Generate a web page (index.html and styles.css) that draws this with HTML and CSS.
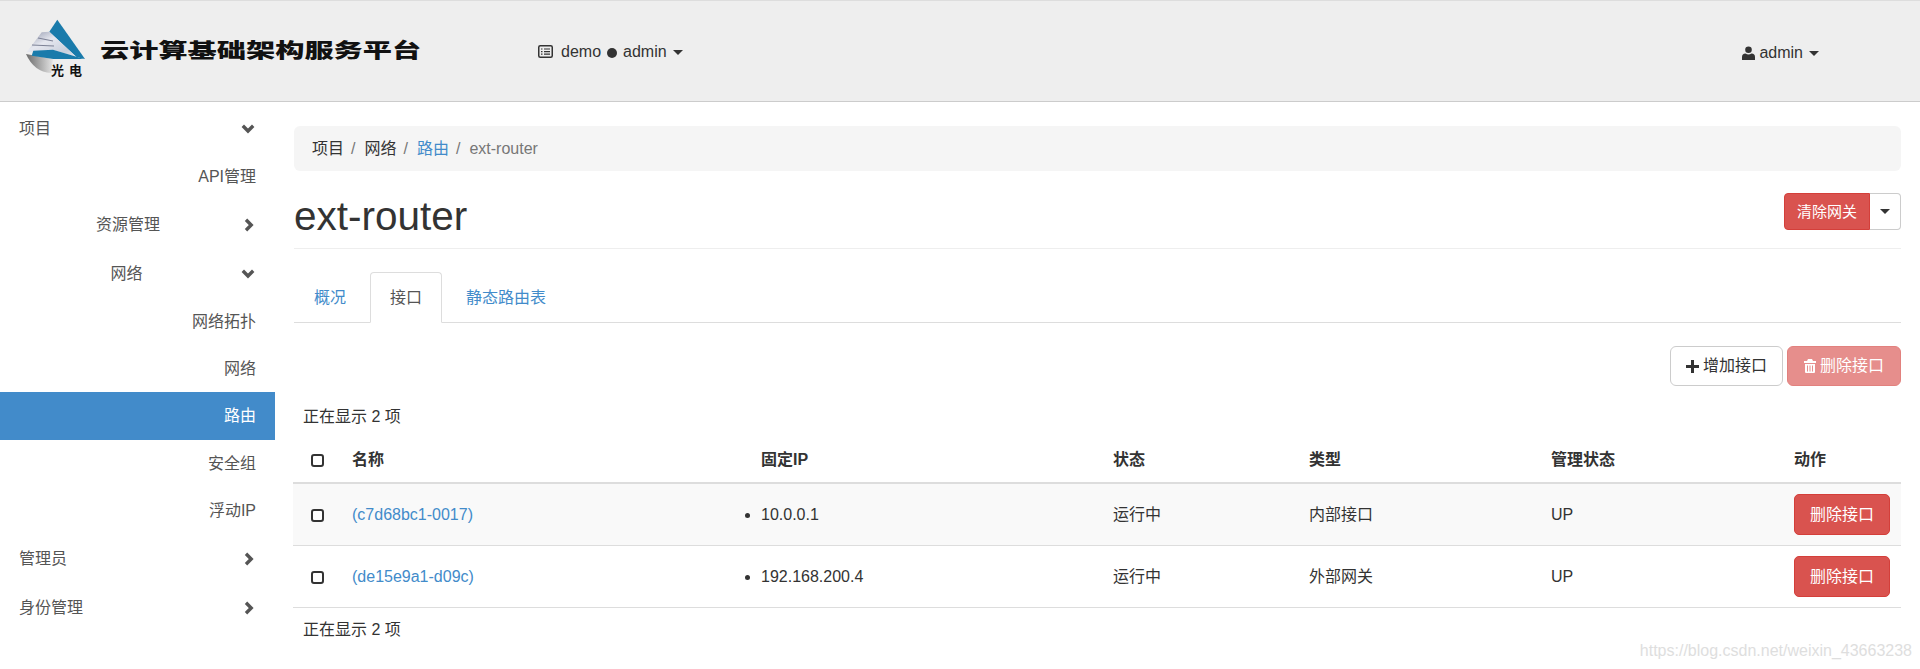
FILE: index.html
```html
<!DOCTYPE html>
<html lang="zh-CN">
<head>
  <meta charset="UTF-8" />
  <title>ext-router</title>
  <link rel="stylesheet" href="styles.css">
</head>
<body>
  <header class="topbar">
    <div class="brand">
      <svg class="brand-logo" viewBox="0 0 70 62" width="70" height="62">
        <defs>
          <linearGradient id="wing" x1="0" y1="0" x2="1" y2="1">
            <stop offset="0" stop-color="#8d93a8" />
            <stop offset="0.35" stop-color="#e6e8f0" />
            <stop offset="0.7" stop-color="#c9cfdc" />
            <stop offset="1" stop-color="#f2f4f6" />
          </linearGradient>
          <linearGradient id="disc" x1="0" y1="0" x2="1" y2="0">
            <stop offset="0" stop-color="#6b6b6b" />
            <stop offset="1" stop-color="#e4e4e4" />
          </linearGradient>
        </defs>
        <path d="M6 38 L33 43 L31 57 Q14 56 6 38Z" fill="url(#disc)" />
        <path d="M37.3 3.7 L65 43 L56.7 41.3 L29.3 15.7Z" fill="#1a7bab" />
        <path d="M29.3 15.7 L21.7 16.3 L6.7 36.3 L33 33.7 L63 43 L56.7 41.3Z" fill="url(#wing)" />
        <path d="M18 22 L33 25 M12 29 L34 30" stroke="#7d8296" stroke-width="1.2" fill="none" />
        <path d="M13.3 34.7 L33 33.7 L64 43 L33.3 43 L11.7 39.7Z" fill="#1a7bab" />
        <text class="brand-mark" x="31" y="59">光电</text>
      </svg>
      <span class="brand-name">云计算基础架构服务平台</span>
    </div>
    <a class="nav-menu">
      <svg class="icon" viewBox="0 0 15 13" width="15" height="13">
        <rect x="0.75" y="0.75" width="13.5" height="11.5" rx="1.5" fill="none" stroke="#333" stroke-width="1.5" />
        <path d="M3 4h1.5M6 4h6M3 6.6h1.5M6 6.6h6M3 9.2h1.5M6 9.2h6" stroke="#333" stroke-width="1.2" />
      </svg>
      <span>demo</span>
      <i class="dot"></i>
      <span>admin</span>
      <i class="caret"></i>
    </a>
    <a class="nav-menu user-menu">
      <svg class="icon" viewBox="0 0 13 14" width="13" height="14">
        <circle cx="6.5" cy="3.8" r="3.3" fill="#333" />
        <path d="M0 14V11Q0 8 3.5 7.6Q6.5 9.6 9.5 7.6Q13 8 13 11V14Z" fill="#333" />
      </svg>
      <span>admin</span>
      <i class="caret"></i>
    </a>
  </header>

  <div class="page">
    <nav class="sidebar">
      <a class="side-item parent first">项目
        <svg class="chevron" viewBox="0 0 14 10" width="14" height="10"><path d="M1.8 1.8L7 7l5.2-5.2" /></svg>
      </a>
      <a class="side-item leaf">API管理</a>
      <a class="side-item parent">
        <span class="side-label">资源管理</span>
        <svg class="chevron side" viewBox="0 0 10 14" width="10" height="14"><path d="M2 1.8L7.2 7 2 12.2" /></svg>
      </a>
      <a class="side-item parent">
        <span class="side-label">网络</span>
        <svg class="chevron" viewBox="0 0 14 10" width="14" height="10"><path d="M1.8 1.8L7 7l5.2-5.2" /></svg>
      </a>
      <a class="side-item leaf">网络拓扑</a>
      <a class="side-item leaf">网络</a>
      <a class="side-item leaf active">路由</a>
      <a class="side-item leaf">安全组</a>
      <a class="side-item leaf">浮动IP</a>
      <a class="side-item parent">管理员
        <svg class="chevron side" viewBox="0 0 10 14" width="10" height="14"><path d="M2 1.8L7.2 7 2 12.2" /></svg>
      </a>
      <a class="side-item parent">身份管理
        <svg class="chevron side" viewBox="0 0 10 14" width="10" height="14"><path d="M2 1.8L7.2 7 2 12.2" /></svg>
      </a>
    </nav>

    <main class="content">
      <ol class="breadcrumb">
        <li>项目</li>
        <li>网络</li>
        <li><a>路由</a></li>
        <li class="current">ext-router</li>
      </ol>

      <div class="page-header">
        <h1>ext-router</h1>
        <div class="btn-group">
          <button class="btn btn-danger btn-gateway">清除网关</button>
          <button class="btn btn-toggle"><i class="caret"></i></button>
        </div>
      </div>

      <ul class="tabs">
        <li><a>概况</a></li>
        <li class="active"><a>接口</a></li>
        <li><a>静态路由表</a></li>
      </ul>

      <div class="actions">
        <button class="btn btn-default">
          <svg viewBox="0 0 13 13" width="13" height="13"><path d="M5 0h3v5h5v3H8v5H5V8H0V5h5z" fill="#333" /></svg>
          增加接口
        </button>
        <button class="btn btn-danger btn-disabled">
          <svg viewBox="0 0 12 14" width="12" height="14"><path d="M4 0h4l1 2h3v2H0V2h3zM1 5h10v8q0 1-1 1H2q-1 0-1-1zM3 6.5v6h1v-6zM5.5 6.5v6h1v-6zM8 6.5v6h1v-6z" fill="#fff" fill-rule="evenodd" /></svg>
          删除接口
        </button>
      </div>

      <p class="count">正在显示 2 项</p>

      <table class="data-table">
        <colgroup>
          <col class="col-check"><col class="col-name"><col class="col-ip"><col class="col-status"><col class="col-type"><col class="col-admin"><col class="col-action">
        </colgroup>
        <thead>
          <tr>
            <th><i class="check"></i></th>
            <th>名称</th>
            <th>固定IP</th>
            <th>状态</th>
            <th>类型</th>
            <th>管理状态</th>
            <th>动作</th>
          </tr>
        </thead>
        <tbody>
          <tr class="odd">
            <td><i class="check"></i></td>
            <td><a>(c7d68bc1-0017)</a></td>
            <td><ul class="ips"><li>10.0.0.1</li></ul></td>
            <td>运行中</td>
            <td>内部接口</td>
            <td>UP</td>
            <td><button class="btn btn-danger btn-row">删除接口</button></td>
          </tr>
          <tr>
            <td><i class="check"></i></td>
            <td><a>(de15e9a1-d09c)</a></td>
            <td><ul class="ips"><li>192.168.200.4</li></ul></td>
            <td>运行中</td>
            <td>外部网关</td>
            <td>UP</td>
            <td><button class="btn btn-danger btn-row">删除接口</button></td>
          </tr>
        </tbody>
      </table>

      <p class="count count-bottom">正在显示 2 项</p>
    </main>
  </div>

  <div class="watermark">https://blog.csdn.net/weixin_43663238</div>
</body>
</html>
```

FILE: styles.css
```css
/* Reset and base */
* {
  box-sizing: border-box;
  margin: 0;
  padding: 0;
}

body {
  position: relative;
  min-height: 669px;
  background: #fff;
  color: #333;
  font-family: "Liberation Sans", "Noto Sans CJK SC", sans-serif;
  font-size: 16px;
  line-height: 22px;
}

a {
  color: #428bca;
  text-decoration: none;
}

i {
  display: inline-block;
  font-style: normal;
}

.caret {
  width: 0;
  height: 0;
  border-left: 5px solid transparent;
  border-right: 5px solid transparent;
  border-top: 5px solid #333;
}

/* Top bar */
.topbar {
  display: flex;
  align-items: center;
  height: 102px;
  background: #eee;
  border-top: 1px solid #ddd;
  border-bottom: 1px solid #ccc;
}

.brand {
  display: flex;
  align-items: center;
  width: 538px;
  padding-left: 20px;
  margin-top: -3px;
}

.brand-logo {
  flex: none;
  margin-top: -6px;
}

.brand-mark {
  font-family: "Noto Sans CJK SC", sans-serif;
  font-size: 13px;
  font-weight: 700;
  letter-spacing: 5px;
  fill: #111;
}

.brand-name {
  margin: 0 0 0 10px;
  font-family: "Noto Sans CJK SC", sans-serif;
  font-size: 20px;
  font-weight: 900;
  line-height: 24px;
  color: #111;
  white-space: nowrap;
  transform: scaleX(1.46);
  transform-origin: left center;
}

.nav-menu {
  display: flex;
  align-items: center;
  gap: 6px;
  color: #333;
  margin-top: 1px;
}

.nav-menu .icon {
  margin-right: 2px;
}

.nav-menu .caret {
  margin-top: 1px;
}

.dot {
  width: 10px;
  height: 10px;
  border-radius: 50%;
  background: #333;
  margin-top: 3px;
}

.user-menu {
  margin-left: auto;
  margin-right: 101px;
  margin-top: 3px;
}

.user-menu .icon {
  margin-right: -2px;
}

/* Page columns */
.page {
  display: flex;
}

.sidebar {
  flex: none;
  width: 275px;
  padding-top: 3px;
}

.side-item {
  display: flex;
  align-items: center;
  color: #555;
  padding: 0 19px;
}

.side-item.parent {
  height: 49px;
  justify-content: space-between;
}

.side-item.first {
  height: 48px;
}

.side-item.leaf {
  height: 47px;
  justify-content: flex-end;
}

.side-item.active {
  height: 48px;
  background: #428bca;
  color: #fff;
}

.side-label {
  flex: 1;
  padding-right: 7px;
  text-align: center;
}

.chevron {
  flex: none;
  fill: none;
  stroke: #555;
  stroke-width: 3.4;
  margin-right: 1px;
}

.chevron.side {
  margin-right: 2px;
}

.content {
  flex: 1;
  min-width: 0;
  padding: 24px 19px 0;
}

/* Breadcrumb */
.breadcrumb {
  display: flex;
  align-items: center;
  height: 45px;
  padding: 1px 18px 0;
  background: #f5f5f5;
  border-radius: 6px;
  list-style: none;
}

.breadcrumb li + li::before {
  content: "/";
  color: #777;
  padding: 0 9px 0 7px;
}

.breadcrumb .current {
  color: #777;
}

/* Page header */
.page-header {
  display: flex;
  justify-content: space-between;
  height: 78px;
  padding-top: 22px;
  border-bottom: 1px solid #eee;
}

h1 {
  font-size: 40.5px;
  font-weight: 400;
  line-height: 46px;
}

.btn-group {
  display: flex;
}

.btn {
  display: inline-flex;
  align-items: center;
  justify-content: center;
  border: 1px solid transparent;
  border-radius: 5px;
  font-family: inherit;
  font-size: 16px;
  line-height: 22px;
}

.btn-danger {
  background: #d9534f;
  border-color: #d43f3a;
  color: #fff;
}

.btn-default {
  background: #fff;
  border-color: #ccc;
  color: #333;
}

.btn-gateway {
  width: 86px;
  height: 37px;
  font-size: 15px;
  border-radius: 4px 0 0 4px;
}

.btn-toggle {
  width: 31px;
  height: 37px;
  background: #fff;
  border: 1px solid #ccc;
  border-left: 0;
  border-radius: 0 4px 4px 0;
}

/* Tabs */
.tabs {
  display: flex;
  gap: 4px;
  height: 51px;
  margin-top: 23px;
  list-style: none;
  border-bottom: 1px solid #ddd;
}

.tabs a {
  display: block;
  height: 51px;
  padding: 0 19px;
  border: 1px solid transparent;
  border-radius: 4px 4px 0 0;
  line-height: 50px;
}

.tabs .active a {
  background: #fff;
  border-color: #ddd #ddd #fff;
  color: #555;
}

/* Actions and table */
.actions {
  display: flex;
  justify-content: flex-end;
  gap: 4px;
  margin-top: 23px;
}

.actions .btn {
  gap: 4px;
  width: 114px;
  height: 40px;
  border-radius: 6px;
}

.actions .btn-default {
  width: 113px;
}

.btn-disabled {
  opacity: 0.65;
}

.count {
  margin-top: 20px;
  padding-left: 9px;
}

.count-bottom {
  margin-top: 11px;
}

.data-table {
  width: calc(100% + 1px);
  margin-top: 9px;
  margin-left: -1px;
  table-layout: fixed;
  border-collapse: separate;
  border-spacing: 0;
}

.col-check { width: 49px; }
.col-name { width: 409px; }
.col-ip { width: 352px; }
.col-status { width: 196px; }
.col-type { width: 242px; }
.col-admin { width: 243px; }
.col-action { width: 117px; }

th, td {
  padding: 10px;
  text-align: left;
  vertical-align: middle;
}

th {
  height: 47px;
  font-weight: 700;
  border-bottom: 2px solid #ddd;
}

td {
  height: 62px;
  border-bottom: 1px solid #ddd;
}

.odd td {
  background: #f9f9f9;
}

.check {
  display: block;
  width: 13px;
  height: 13px;
  margin: 2px 0 0 8px;
  border: 2px solid #333;
  border-radius: 3px;
  background: #fff;
}

.ips {
  list-style: disc outside;
}

.btn-row {
  display: flex;
  width: 96px;
  height: 41px;
}

.watermark {
  position: absolute;
  right: 8px;
  top: 640px;
  color: #dedede;
  font-size: 16px;
  white-space: nowrap;
}
```
